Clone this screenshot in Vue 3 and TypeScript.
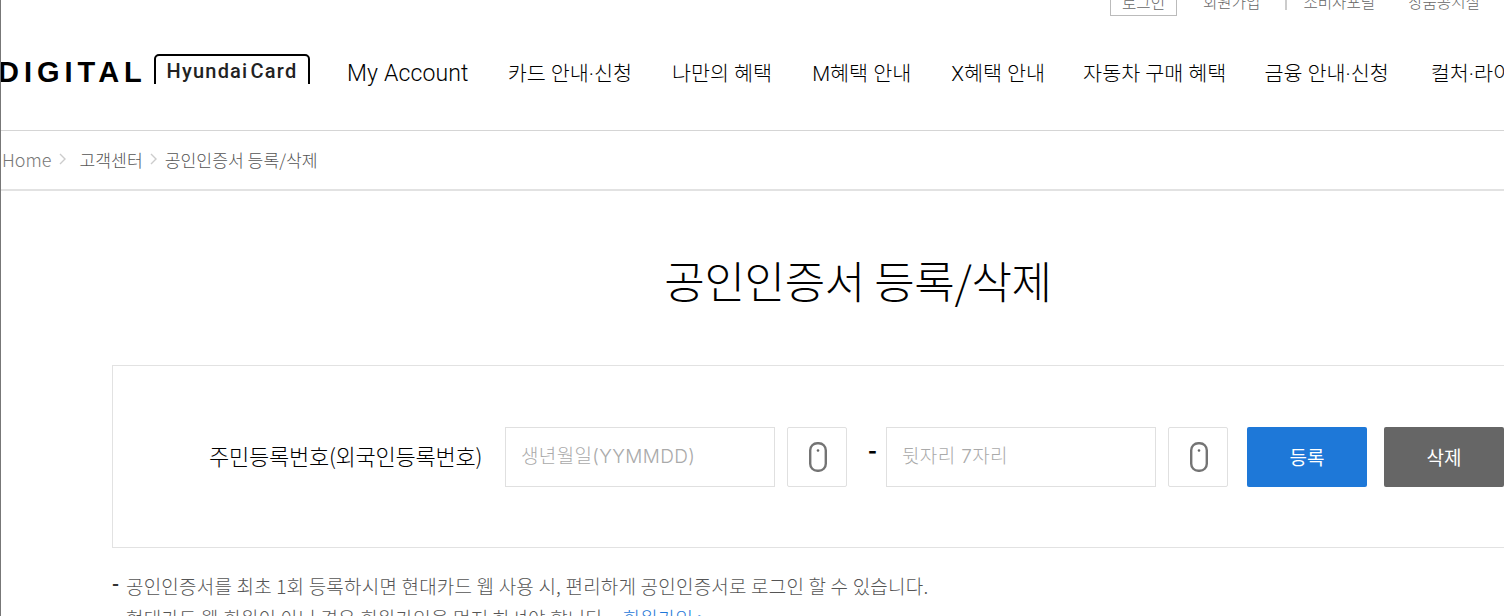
<template>
  <div class="page">
    <div class="clip">
      <div class="util">
        <a class="login">로그인</a>
        <a class="join">회원가입</a>
        <i class="sep"></i>
        <a class="portal">소비자포털</a>
        <a>상품공시실</a>
      </div>
      <header class="gnb">
        <div class="logo">
          <span class="digital">DIGITAL</span>
          <span class="hc">Hyundai Card</span>
        </div>
        <nav class="menu">
          <a v-for="m in menu" :key="m" :class="{ en: m === 'My Account' }">{{ m }}</a>
        </nav>
      </header>
      <div class="crumb">
        <span class="home">Home</span><svg class="chev c1" width="7" height="12" viewBox="0 0 7 12"><path d="M1 1l5 5-5 5" fill="none" stroke="#ccc" stroke-width="1.4"/></svg>
        <span>고객센터</span><svg class="chev c2" width="7" height="12" viewBox="0 0 7 12"><path d="M1 1l5 5-5 5" fill="none" stroke="#ccc" stroke-width="1.4"/></svg>
        <span>공인인증서 등록/삭제</span>
      </div>
      <main class="content">
        <h1>공인인증서 등록/삭제</h1>
        <section class="card">
          <label class="lab">주민등록번호(외국인등록번호)</label>
          <div class="field w270">생년월일(YYMMDD)</div>
          <button class="mouse" aria-label="마우스 입력">
            <svg width="18" height="30" viewBox="0 0 18 30"><rect x="1.2" y="1.2" width="15.6" height="27.6" rx="7" fill="#fff" stroke="#747474" stroke-width="2.4"/><circle cx="9" cy="8.5" r="1.3" fill="#666"/></svg>
          </button>
          <span class="dash">-</span>
          <div class="field w270">뒷자리 7자리</div>
          <button class="mouse" aria-label="마우스 입력">
            <svg width="18" height="30" viewBox="0 0 18 30"><rect x="1.2" y="1.2" width="15.6" height="27.6" rx="7" fill="#fff" stroke="#747474" stroke-width="2.4"/><circle cx="9" cy="8.5" r="1.3" fill="#666"/></svg>
          </button>
          <button class="btn blue">등록</button>
          <button class="btn gray">삭제</button>
        </section>
        <ul class="notes">
          <li>공인인증서를 최초 1회 등록하시면 현대카드 웹 사용 시, 편리하게 공인인증서로 로그인 할 수 있습니다.</li>
          <li>현대카드 웹 회원이 아닌 경우 회원가입을 먼저 하셔야 합니다. <a>회원가입 &gt;</a></li>
        </ul>
      </main>
    </div>
  </div>
</template>

<script setup lang="ts">
const menu: string[] = [
  'My Account',
  '카드 안내·신청',
  '나만의 혜택',
  'M혜택 안내',
  'X혜택 안내',
  '자동차 구매 혜택',
  '금융 안내·신청',
  '컬처·라이프',
]
</script>

<style>
html, body { margin: 0; overflow: hidden; background: #fff; }
</style>

<style scoped>
.page {
  width: 1504px;
  height: 616px;
  overflow: hidden;
  box-sizing: border-box;
  border-left: 1px solid #777;
  font-family: "Noto Sans CJK KR", "Noto Sans", sans-serif;
  font-weight: 300;
}
.clip { margin-top: -9px; width: 1700px; }
.util {
  height: 25px;
  display: flex;
  align-items: flex-start;
  padding-left: 1109px;
  box-sizing: border-box;
  font-size: 15.6px;
  line-height: 20px;
  color: #666;
}
.util a { white-space: nowrap; margin-right: 33px; }
.util .login {
  width: 67px;
  height: 25px;
  border: 1px solid #bbb;
  box-sizing: border-box;
  text-align: center;
  margin-right: 26px;
}
.util .join { margin-right: 25px; }
.util .sep { width: 2px; height: 19px; background: #ccc; margin-right: 16px; }
.gnb {
  height: 114px;
  display: flex;
  align-items: flex-start;
  border-bottom: 1px solid #d5d5d5;
}
.logo { display: flex; align-items: flex-start; width: 346px; height: 30px; padding-top: 38px; overflow: hidden; flex: none; }
.digital {
  font-family: "Liberation Sans", sans-serif;
  font-weight: 700;
  font-size: 29px;
  line-height: 30px;
  letter-spacing: 5px;
  color: #000;
  width: 155px;
  white-space: nowrap;
  margin-top: 3px;
  margin-left: -3px;
  flex: none;
}
.hc {
  box-sizing: border-box;
  width: 156px;
  height: 40px;
  border: 2px solid #000;
  border-radius: 5px;
  font-family: "Roboto", sans-serif;
  font-weight: 500;
  font-size: 20px;
  line-height: 30px;
  letter-spacing: 1.2px;
  word-spacing: -4px;
  text-align: center;
  color: #222;
  white-space: nowrap;
  flex: none;
  margin-left: 1px;
}
.menu {
  display: flex;
  gap: 40px;
  padding-top: 42px;
  font-family: "Roboto", "Noto Sans CJK KR", sans-serif;
  font-size: 20.7px;
  line-height: 32px;
  color: #000;
  white-space: nowrap;
}
.menu a { display: block; }
.menu a:nth-child(6), .menu a:nth-child(7) { margin-left: -2px; }
.menu a:nth-child(8) { margin-left: 2px; }
.menu .en { font-size: 23px; letter-spacing: 0.15px; margin-right: -1px; }
.crumb {
  display: flex;
  align-items: center;
  border-bottom: 2px solid #e2e2e2;
  font-size: 17.2px;
  color: #555;
  padding: 0 0 2px 1px;
  height: 56px;
}
.crumb .chev { flex: none; }
.crumb .c1 { margin: 0 13px 0 8px; }
.crumb .c2 { margin: 0 8px 0 7px; }
.crumb .home { color: #777; font-size: 18px; }
.content { padding-left: 111px; width: 1492px; }
h1 {
  margin: 54px 0 0;
  font-size: 44px;
  line-height: 70px;
  font-weight: 300;
  text-align: center;
  color: #000;
  letter-spacing: -0.36px;
}
.card {
  margin-top: 50px;
  height: 183px;
  box-sizing: border-box;
  border: 1px solid #e2e2e2;
  display: flex;
  align-items: center;
  padding: 0 0 0 96px;
}
.lab { font-size: 22px; color: #000; width: 296px; white-space: nowrap; letter-spacing: -0.25px; flex: none; margin-bottom: 4px; }
.field {
  box-sizing: border-box;
  height: 60px;
  border: 1px solid #e0e0e0;
  font-family: "Inter", "Noto Sans CJK KR", sans-serif;
  font-size: 19px;
  letter-spacing: 0.35px;
  line-height: 58px;
  color: #aaa;
  padding-left: 15px;
  flex: none;
}
.w270 { width: 270px; }
.mouse {
  box-sizing: border-box;
  width: 60px;
  height: 60px;
  margin-left: 12px;
  padding: 0 0 0 1px;
  border: 1px solid #e0e0e0;
  border-radius: 2px;
  background: #fff;
  display: flex;
  align-items: center;
  justify-content: center;
  flex: none;
}
.dash { width: 39px; box-sizing: border-box; padding-left: 21px; font-size: 24px; color: #000; margin-top: -17px; font-weight: 700; flex: none; }
.btn {
  box-sizing: border-box;
  width: 120px;
  height: 60px;
  border: 0;
  border-radius: 2px;
  color: #fff;
  font-family: inherit;
  font-weight: 400;
  font-size: 19px;
  margin-left: 19px;
  padding: 0;
  flex: none;
}
.blue { background: #1e78d8; }
.gray { background: #666; margin-left: 17px; }
.notes {
  list-style: none;
  margin: 22px 0 0;
  padding: 0;
  font-size: 19px;
  letter-spacing: 0.2px;
  line-height: 32px;
  color: #555;
}
.notes li { padding-left: 14px; position: relative; white-space: nowrap; }
.notes li::before { content: "-"; position: absolute; left: 0; top: -4px; color: #333; font-weight: 700; }
.notes a { color: #1e78d8; margin-left: 10px; }
</style>
